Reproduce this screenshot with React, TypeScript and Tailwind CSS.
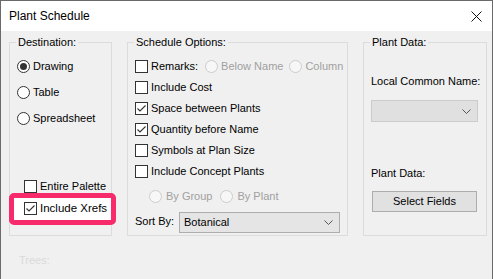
import React from "react";

function Check({ checked = false }: { checked?: boolean }) {
  return (
    <span className="w-[13px] h-[13px] border border-[#333] bg-white flex items-center justify-center shrink-0">
      {checked && (
        <svg width="11" height="11" viewBox="0 0 11 11" fill="none">
          <path d="M1.5 5.5 L4 8 L9.5 2.5" stroke="#333" strokeWidth="1.1" />
        </svg>
      )}
    </span>
  );
}

function Radio({ selected = false, disabled = false }: { selected?: boolean; disabled?: boolean }) {
  return (
    <span
      className={
        disabled
          ? "w-[13px] h-[13px] rounded-full border border-[#cccccc] bg-[#f7f7f7] flex items-center justify-center shrink-0"
          : "w-[13px] h-[13px] rounded-full border border-[#333] bg-white flex items-center justify-center shrink-0"
      }
    >
      {selected && <span className="w-[7px] h-[7px] rounded-full bg-[#333]" />}
    </span>
  );
}

function Chevron() {
  return (
    <svg width="9" height="5" viewBox="0 0 9 5" fill="none">
      <path d="M0.5 0.5 L4.5 4.5 L8.5 0.5" stroke="#555" strokeWidth="1" />
    </svg>
  );
}

export default function App() {
  return (
    <div className="w-[493px] h-[279px] overflow-hidden border-t border-x border-[#6a6a6a] bg-[#f0f0f0] text-[11px] leading-[15px] text-black whitespace-nowrap font-['Liberation_Sans',sans-serif] relative">
      <div className="h-[30px] bg-white flex items-center justify-between pl-[8px] pr-[10px]">
        <span className="text-[12px]">Plant Schedule</span>
        <svg width="11" height="11" viewBox="0 0 11 11" fill="none">
          <path d="M0.5 0.5 L10.5 10.5 M10.5 0.5 L0.5 10.5" stroke="#111" strokeWidth="1" />
        </svg>
      </div>

      <div className="flex pl-[8px] pt-[4px] gap-[15px]">
        <fieldset className="w-[103px] min-w-0 shrink-0 h-[201px] border border-[#dcdcdc]">
          <legend className="ml-[6px] px-[2px]">Destination:</legend>
          <div className="flex flex-col pl-[7px]">
            <label className="h-[20px] mt-[6px] flex items-center gap-[3px]">
              <Radio selected />
              <span>Drawing</span>
            </label>
            <label className="h-[20px] mt-[6px] flex items-center gap-[3px]">
              <Radio />
              <span>Table</span>
            </label>
            <label className="h-[20px] mt-[6px] flex items-center gap-[3px]">
              <Radio />
              <span>Spreadsheet</span>
            </label>
            <label className="h-[20px] mt-[48px] pl-[7px] flex items-center gap-[3px]">
              <Check />
              <span>Entire Palette</span>
            </label>
            <div className="relative h-[20px] mt-[2px]">
              <div className="absolute top-[-5px] left-[-8px] w-[107px] h-[32px] border-[5px] border-[#f72b6b] rounded-[5px] bg-white" />
              <label className="relative h-[20px] pl-[7px] flex items-center gap-[3px]">
                <Check checked />
                <span className="text-[11.5px]">Include Xrefs</span>
              </label>
            </div>
          </div>
        </fieldset>

        <fieldset className="w-[221px] min-w-0 shrink-0 h-[201px] border border-[#dcdcdc]">
          <legend className="ml-[6px] px-[2px]">Schedule Options:</legend>
          <div className="flex flex-col pl-[7px]">
            <div className="h-[21px] mt-[6px] flex items-center">
              <Check />
              <span className="ml-[3px]">Remarks:</span>
              <span className="ml-[7px]"><Radio disabled /></span>
              <span className="ml-[3px] text-[#a0a0a0]">Below Name</span>
              <span className="ml-[6px]"><Radio disabled /></span>
              <span className="ml-[3px] text-[#a0a0a0]">Column</span>
            </div>
            <label className="h-[21px] flex items-center gap-[3px]">
              <Check />
              <span>Include Cost</span>
            </label>
            <label className="h-[21px] flex items-center gap-[3px]">
              <Check checked />
              <span>Space between Plants</span>
            </label>
            <label className="h-[21px] flex items-center gap-[3px]">
              <Check checked />
              <span>Quantity before Name</span>
            </label>
            <label className="h-[21px] flex items-center gap-[3px]">
              <Check />
              <span>Symbols at Plan Size</span>
            </label>
            <label className="h-[21px] flex items-center gap-[3px]">
              <Check />
              <span>Include Concept Plants</span>
            </label>
            <div className="h-[20px] mt-[4px] pl-[14px] flex items-center">
              <Radio disabled />
              <span className="ml-[4px] text-[#a0a0a0]">By Group</span>
              <span className="ml-[8px]"><Radio disabled /></span>
              <span className="ml-[4px] text-[#a0a0a0]">By Plant</span>
            </div>
            <div className="mt-[6px] flex items-center">
              <span className="w-[44px] -mt-[3px]">Sort By:</span>
              <div className="w-[161px] h-[21px] border border-[#adadad] bg-[#e5e5e5] flex items-center justify-between pl-[4px] pr-[6px]">
                <span>Botanical</span>
                <Chevron />
              </div>
            </div>
          </div>
        </fieldset>

        <fieldset className="w-[124px] min-w-0 shrink-0 h-[201px] border border-[#dcdcdc]">
          <legend className="ml-[6px] px-[2px]">Plant Data:</legend>
          <div className="flex flex-col pl-[7px]">
            <span className="mt-[24px]">Local Common Name:</span>
            <div className="mt-[11px] w-[107px] h-[22px] border border-[#cccccc] bg-[#e0e0e0] flex items-center justify-end pr-[6px]">
              <Chevron />
            </div>
            <span className="mt-[44px]">Plant Data:</span>
            <button className="mt-[10px] ml-[1px] w-[105px] h-[21px] border border-[#adadad] bg-[#e1e1e1] flex items-center justify-center">
              Select Fields
            </button>
          </div>
        </fieldset>
      </div>

      <div className="pl-[18px] pt-[17px] text-[#dadada]">Trees:</div>
    </div>
  );
}
